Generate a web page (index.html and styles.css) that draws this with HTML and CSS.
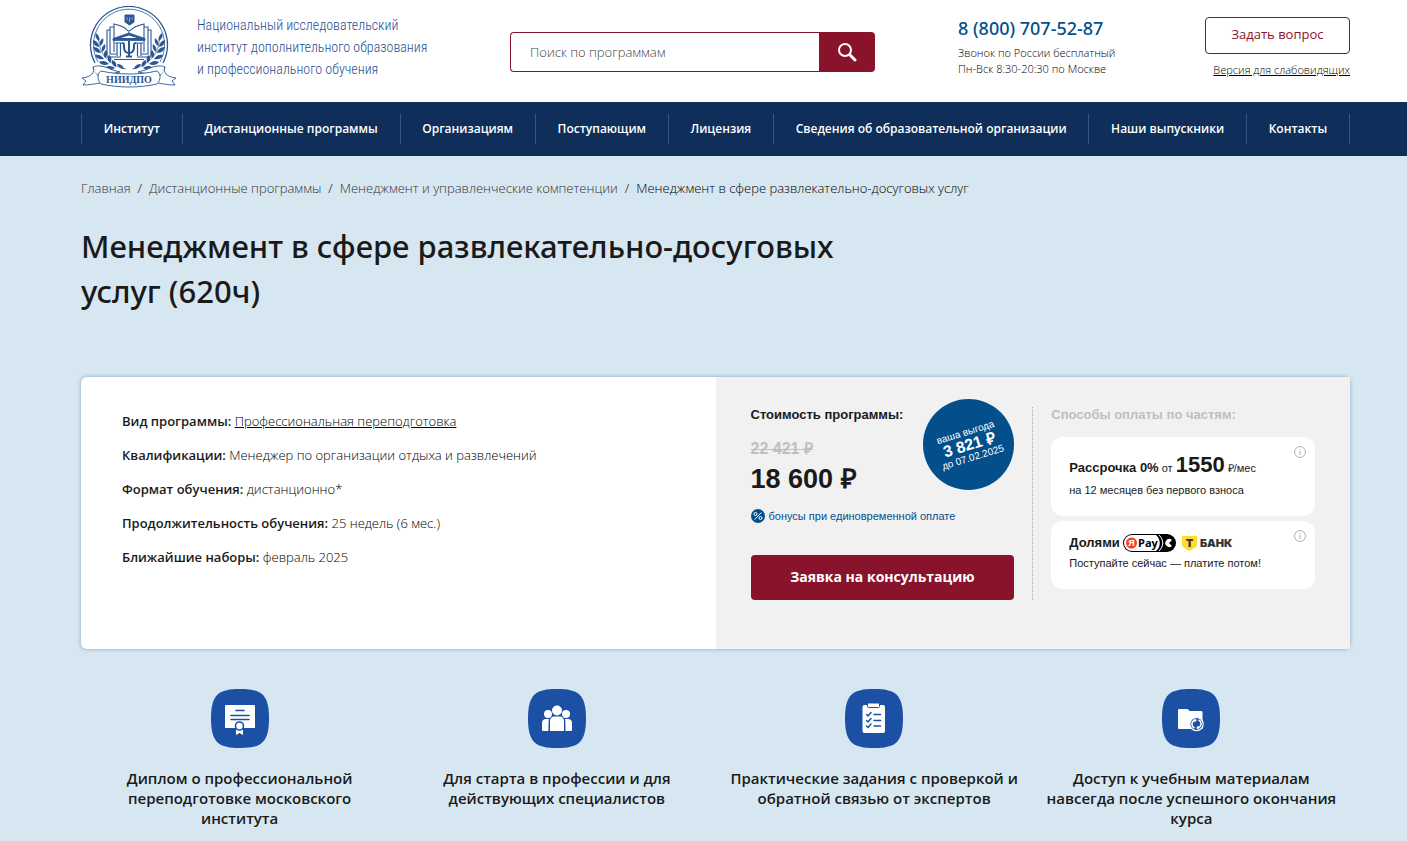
FILE: index.html
```html
<!DOCTYPE html>
<html lang="ru">
<head>
    <meta charset="UTF-8">
    <meta name="viewport" content="width=device-width, initial-scale=1.0">
    <title>Менеджмент в сфере развлекательно-досуговых услуг (620ч)</title>
    <link rel="stylesheet" href="styles.css">
</head>
<body>
    <header class="header wrap">
        <a class="logo" href="#">
            <svg class="logo-emblem" width="96" height="82" viewBox="0 0 96 82" fill="none" stroke="#2a5795">
                <path d="M14 57A38.500 38.500 0 1 1 82 57" stroke-width="1.3"/>
                <path d="M17 56A35.500 35.500 0 1 1 79 56" stroke-width=".8"/>
                <path d="M44 9h9v7l-4.500 3-4.500-3z" fill="#2a5795"/>
                <path d="M46 11v3m5-3v3m-2.500-3v5" stroke="#b9cbe3" stroke-width=".7"/>
                <!-- book -->
                <path d="M47 25c-3-4-9-6-14-7v28M49 25c3-4 9-6 14-7v28M33 21h-4v27h6M63 21h4v27h-6M29 24h-3v27h9M67 24h3v27h-9M48 24v5" stroke-width="1.1"/>
                <!-- temple -->
                <path d="M48 27L32 32.500v2h32v-2z" fill="#2a5795" stroke-width=".8"/>
                <path d="M40 32l8-2.500 8 2.500z" fill="#fff" stroke="none"/>
                <path d="M34 37h7M55 37h7M36 37v13M39.500 37v13M56.500 37v13M60 37v13M35 51h5M56 51h5M33 53.500h30" stroke-width="1.2"/>
                <path d="M48 35v16M45 50.500h6" stroke-width="2"/>
                <path d="M41 37c2.500 0 2 2 2 4 0 4 2 6 5 6s5-2 5-6c0-2-.5-4 2-4" stroke-width="2"/>
                <!-- laurel -->
                <path d="M18 32c-1 14 9 27 27 31M78 32c1 14-9 27-27 31" stroke-width=".7"/>
                <g fill="#2a5795" stroke="none" transform="translate(0 -2)">
                    <path d="M18 37c-4-3-4-6-3-8 3 2 4 5 3 8zM18 43c-5-1-6-4-6-7 4 1 6 4 6 7zM20 49c-5 0-7-3-8-6 4 0 7 2 8 6zM23 55c-5 1-8-1-9-4 4-1 7 1 9 4zM28 60c-4 2-8 1-10-2 4-2 7-1 10 2zM34 64c-4 3-8 2-10 0 3-3 7-2 10 0zM19 42c3-2 4-5 3-8-3 2-4 5-3 8zM21 48c3-2 4-5 3-8-3 2-4 5-3 8zM24 54c3-3 3-6 1-8-2 2-3 5-1 8zM29 59c2-3 2-6-1-8-2 3-1 6 1 8zM35 63c1-4-1-6-4-7-1 3 1 6 4 7zM43 65c-1-4-4-5-7-5 1 3 4 5 7 5z"/>
                    <path d="M78 37c4-3 4-6 3-8-3 2-4 5-3 8zM78 43c5-1 6-4 6-7-4 1-6 4-6 7zM76 49c5 0 7-3 8-6-4 0-7 2-8 6zM73 55c5 1 8-1 9-4-4-1-7 1-9 4zM68 60c4 2 8 1 10-2-4-2-7-1-10 2zM62 64c4 3 8 2 10 0-3-3-7-2-10 0zM77 42c-3-2-4-5-3-8 3 2 4 5 3 8zM75 48c-3-2-4-5-3-8 3 2 4 5 3 8zM72 54c-3-3-3-6-1-8 2 2 3 5 1 8zM67 59c-2-3-2-6 1-8 2 3 1 6-1 8zM61 63c-1-4 1-6 4-7 1 3-1 6-4 7zM53 65c1-4 4-5 7-5-1 3-4 5-7 5z"/>
                </g>
                <!-- ribbon -->
                <g stroke-width=".9">
                    <path d="M12 61c4-2 10-1 15 1 4 2 8 3 12 4l-20 4c-5-1-6-6-7-9zM84 61c-4-2-10-1-15 1-4 2-8 3-12 4l20 4c5-1 6-6 7-9z" fill="#fff"/>
                    <path d="M12 61c2 5-1 10-11 11l4 3-3 4c6 0 11-1 17-2M84 61c-2 5 1 10 11 11l-4 3 3 4c-6 0-11-1-17-2" fill="#fff"/>
                    <path d="M20 78c-4-4-4-11 0-13 18 4 38 4 56 0 4 2 4 9 0 13-18 4-38 4-56 0z" fill="#fff"/>
                </g>
                <text x="48" y="77" text-anchor="middle" class="emblem-text">НИИДПО</text>
            </svg>
            <span class="logo-text">Национальный исследовательский<br>институт дополнительного образования<br>и профессионального обучения</span>
        </a>
        <form class="search">
            <input class="search-input" type="text" placeholder="Поиск по программам" aria-label="Поиск по программам">
            <button class="search-button" type="submit" aria-label="Найти">
                <svg width="20" height="20" viewBox="0 0 20 20" fill="none" stroke="#fff">
                    <circle cx="8" cy="8" r="6" stroke-width="2"/>
                    <path d="M13 13l5 5" stroke-width="3" stroke-linecap="round"/>
                </svg>
            </button>
        </form>
        <div class="contacts">
            <a class="phone" href="tel:88007075287">8 (800) 707-52-87</a>
            <p class="contacts-note">Звонок по России бесплатный<br>Пн-Вск 8:30-20:30 по Москве</p>
        </div>
        <div class="actions">
            <button class="ask-button" type="button">Задать вопрос</button>
            <a class="vision-link" href="#">Версия для слабовидящих</a>
        </div>
    </header>

    <nav class="nav">
        <ul class="nav-list wrap">
            <li><a href="#">Институт</a></li>
            <li><a href="#">Дистанционные программы</a></li>
            <li><a href="#">Организациям</a></li>
            <li><a href="#">Поступающим</a></li>
            <li><a href="#">Лицензия</a></li>
            <li><a href="#">Сведения об образовательной организации</a></li>
            <li><a href="#">Наши выпускники</a></li>
            <li><a href="#">Контакты</a></li>
        </ul>
    </nav>

    <main class="wrap">
        <div class="breadcrumbs">
            <a href="#">Главная</a><span>/</span><a href="#">Дистанционные программы</a><span>/</span><a href="#">Менеджмент и управленческие компетенции</a><span>/</span>Менеджмент в сфере развлекательно-досуговых услуг
        </div>
        <h1>Менеджмент в сфере развлекательно-досуговых услуг (620ч)</h1>

        <section class="program">
            <div class="program-info">
                <p><b>Вид программы:</b> <a href="#">Профессиональная переподготовка</a></p>
                <p><b>Квалификации:</b> Менеджер по организации отдыха и развлечений</p>
                <p><b>Формат обучения:</b> дистанционно*</p>
                <p><b>Продолжительность обучения:</b> 25 недель (6 мес.)</p>
                <p><b>Ближайшие наборы:</b> февраль 2025</p>
            </div>
            <div class="program-price">
                <div class="price">
                    <p class="price-title">Стоимость программы:</p>
                    <p class="price-old">22 421 ₽</p>
                    <p class="price-new">18 600 ₽</p>
                    <p class="price-bonus">
                        <svg width="14" height="14" viewBox="0 0 14 14" fill="none" stroke="#fff">
                            <circle cx="7" cy="7" r="7" fill="#034f8b" stroke="none"/>
                            <path d="M10.500 3.500l-7 7"/>
                            <circle cx="4.500" cy="5" r="1.500"/>
                            <circle cx="9.500" cy="9" r="1.500"/>
                        </svg>
                        бонусы при единовременной оплате
                    </p>
                    <button class="apply-button" type="button">Заявка на консультацию</button>
                    <div class="profit">
                        <div class="profit-text">ваша выгода<strong>3 821 ₽</strong>до 07.02.2025</div>
                    </div>
                </div>
                <div class="parts">
                    <p class="parts-title">Способы оплаты по частям:</p>
                    <div class="part part-installment">
                        <p><span class="part-name">Рассрочка 0%</span> от <strong>1550</strong> ₽/мес</p>
                        <p>на 12 месяцев без первого взноса</p>
                        <svg class="info" width="12" height="12" viewBox="0 0 12 12" fill="none" stroke="#b0b0b0">
                            <circle cx="6" cy="6" r="5.500"/>
                            <path d="M6 3v1M6 5v4"/>
                        </svg>
                    </div>
                    <div class="part part-split">
                        <p class="part-row">
                            <span class="part-name">Долями</span>
                            <svg width="53" height="18" viewBox="0 0 53 18">
                                <rect width="53" height="18" rx="9" fill="#000"/>
                                <path d="M9 1h24c5 4 5 12 0 16H9A8 8 0 0 1 9 1z" fill="#fff"/>
                                <path d="M36 1c5 5 5 11 0 16" stroke="#fff" stroke-width="1" fill="none"/>
                                <circle cx="8.500" cy="9" r="5.500" fill="#fc3f1d"/>
                                <text x="8.500" y="12" text-anchor="middle" class="pay-ya">Я</text>
                                <text x="15" y="13" class="pay-text">Pay</text>
                                <path d="M49 6a4 4 0 1 0 0 6l-3-3z" fill="#fff"/>
                            </svg>
                            <svg class="bank" width="54" height="18" viewBox="0 0 54 18">
                                <path d="M0 2h15v9c0 2-3 3.500-7.500 6C3 14.500 0 13 0 11z" fill="#ffdd2d"/>
                                <text x="7.500" y="13" text-anchor="middle" class="bank-t">Т</text>
                                <text x="18" y="13" class="bank-text">БАНК</text>
                            </svg>
                        </p>
                        <p>Поступайте сейчас — платите потом!</p>
                        <svg class="info" width="12" height="12" viewBox="0 0 12 12" fill="none" stroke="#b0b0b0">
                            <circle cx="6" cy="6" r="5.500"/>
                            <path d="M6 3v1M6 5v4"/>
                        </svg>
                    </div>
                </div>
            </div>
        </section>

        <section class="benefits">
            <div class="benefit">
                <svg width="58" height="59" viewBox="0 0 58 59">
                    <path class="tile" d="M29 0C50 0 58 5 58 29.500S50 59 29 59 0 54 0 29.500 8 0 29 0z"/>
                    <path d="M15 16h28a1 1 0 0 1 1 1v22H14V17a1 1 0 0 1 1-1z" fill="#fff"/>
                    <path d="M25 21.500h8M20 26.500h18M20 30.500h18" stroke="#1b50a5" stroke-width="1.600" stroke-linecap="round"/>
                    <path d="M25 39h7v7l-3.500-2-3.500 2z" fill="#fff"/>
                    <circle cx="28.500" cy="37" r="4" fill="#fff" stroke="#1b50a5" stroke-width="1.600"/>
                </svg>
                <p>Диплом о профессиональной переподготовке московского института</p>
            </div>
            <div class="benefit">
                <svg width="58" height="59" viewBox="0 0 58 59">
                    <path class="tile" d="M29 0C50 0 58 5 58 29.500S50 59 29 59 0 54 0 29.500 8 0 29 0z"/>
                    <g fill="#fff">
                        <circle cx="29" cy="21.500" r="5"/>
                        <circle cx="20" cy="25" r="4"/>
                        <circle cx="38" cy="25" r="4"/>
                        <path d="M22 42V32c0-3 2-4.500 4-4.500h6c2 0 4 1.500 4 4.500v10zM20.500 42h-5c-1 0-1.500-.5-1.500-1.500V34c0-3 2-4 3.500-4H21c-.5 1-.5 8-.5 12zM37.500 42h5c1 0 1.500-.5 1.500-1.500V34c0-3-2-4-3.500-4H37c.5 1 .5 8 .5 12z"/>
                    </g>
                </svg>
                <p>Для старта в профессии и для действующих специалистов</p>
            </div>
            <div class="benefit">
                <svg width="58" height="59" viewBox="0 0 58 59">
                    <path class="tile" d="M29 0C50 0 58 5 58 29.500S50 59 29 59 0 54 0 29.500 8 0 29 0z"/>
                    <rect x="17.500" y="16" width="22.500" height="28" rx="2" fill="#fff"/>
                    <rect x="22.500" y="14" width="12" height="4.500" rx="1" fill="#fff" stroke="#1b50a5" stroke-width="1"/>
                    <path d="M21.500 25.500l1.500 1.500 3-3.500M21.500 31.500l1.500 1.500 3-3.500M21.500 37l1.500 1.500 3-3.500M29 25.500h6.500M29 31.500h6.500M29 37h6.500" fill="none" stroke="#1b50a5" stroke-width="1.500" stroke-linecap="round"/>
                </svg>
                <p>Практические задания с проверкой и обратной связью от экспертов</p>
            </div>
            <div class="benefit">
                <svg width="58" height="59" viewBox="0 0 58 59">
                    <path class="tile" d="M29 0C50 0 58 5 58 29.500S50 59 29 59 0 54 0 29.500 8 0 29 0z"/>
                    <path d="M17.500 20H25c1.500 0 2 2 3 2h11c1 0 1.500.5 1.500 1.500V40h-23c-1 0-1.500-.5-1.500-1.500v-17c0-1 .5-1.500 1.500-1.500z" fill="#fff"/>
                    <circle cx="34.500" cy="35" r="6.700" fill="#1b50a5" stroke="#fff" stroke-width="1.200"/>
                    <path d="M33 31c-4 1.500-4 6.500-.5 8M36 39c4-1.500 4-6.500.5-8" fill="none" stroke="#fff" stroke-width="1.400"/>
                    <path d="M32 29.500l3 1.500-2.500 2.500zM37 40.500L34 39l2.500-2.500z" fill="#fff"/>
                </svg>
                <p>Доступ к учебным материалам навсегда после успешного окончания курса</p>
            </div>
        </section>
    </main>
</body>
</html>
```

FILE: styles.css
```css
* {
    box-sizing: border-box;
}
body {
    margin: 0;
    background-color: #d7e7f1;
    color: #000;
    font-family: "Open Sans", sans-serif;
    font-size: 13px;
    font-weight: 300;
}
p, h1, ul {
    margin: 0;
    padding: 0;
}
a {
    color: inherit;
}
strong {
    font-weight: 700;
}
button {
    font-family: inherit;
    cursor: pointer;
}
.wrap {
    padding-left: 81px;
    padding-right: 57px;
}
.header {
    display: flex;
    align-items: flex-start;
    height: 102px;
    background-color: #fff;
}
.logo {
    display: flex;
    flex: 0 0 429px;
    gap: 20px;
    padding-top: 6px;
    color: #1f4f92;
    text-decoration: none;
}
.emblem-text {
    font: bold 10px "Liberation Serif", serif;
    fill: #2a5795;
    stroke: none;
}
.logo-text {
    padding-top: 8px;
    font-family: "Roboto Condensed", Roboto, sans-serif;
    font-size: 14px;
    line-height: 22px;
    white-space: nowrap;
}
.search {
    display: flex;
    flex: 0 0 365px;
    height: 40px;
    margin-top: 32px;
}
.search-input {
    flex: 1;
    min-width: 0;
    padding: 0 19px;
    border: 1px solid #8a132c;
    border-right: none;
    border-radius: 4px 0 0 4px;
    font-family: inherit;
    font-size: 13px;
    font-weight: 300;
}
.search-input::placeholder {
    color: #444;
}
.search-button {
    display: flex;
    align-items: center;
    justify-content: center;
    width: 56px;
    padding: 0;
    border: none;
    border-radius: 0 4px 4px 0;
    background-color: #8a132c;
}
.contacts {
    padding: 16px 0 0 83px;
}
.phone {
    color: #034f8b;
    font-family: "Noto Sans", sans-serif;
    font-size: 18px;
    font-weight: 500;
    line-height: 25px;
    text-decoration: none;
}
.contacts-note {
    padding-top: 4px;
    font-size: 11px;
    line-height: 16px;
}
.actions {
    display: flex;
    flex-direction: column;
    align-items: flex-end;
    gap: 8px;
    margin-left: auto;
    padding-top: 17px;
}
.ask-button {
    width: 145px;
    height: 37px;
    padding-bottom: 4px;
    border: 1px solid #8a132c;
    border-radius: 4px;
    background-color: #fff;
    color: #8a132c;
    font-size: 13px;
    font-weight: 500;
}
.vision-link {
    font-size: 11px;
    line-height: 16px;
}
.nav {
    background-color: #0f2e5a;
}
.nav-list {
    display: flex;
    padding-top: 12px;
    padding-bottom: 12px;
    list-style: none;
}
.nav-list li {
    flex: 1 1 auto;
    border-left: 1px solid #3a547b;
    text-align: center;
}
.nav-list li:last-child {
    border-right: 1px solid #3a547b;
}
.nav-list a {
    color: #fff;
    font-size: 12px;
    font-weight: 600;
    line-height: 30px;
    text-decoration: none;
    white-space: nowrap;
}
.breadcrumbs {
    padding-top: 22px;
    line-height: 20px;
}
.breadcrumbs a {
    color: #333;
    text-decoration: none;
}
.breadcrumbs span {
    padding: 0 7px;
}
h1 {
    max-width: 820px;
    padding-top: 26px;
    color: #1a1a1a;
    font-family: "Noto Sans", sans-serif;
    font-size: 31px;
    font-weight: 500;
    line-height: 45px;
}
.program {
    display: grid;
    grid-template-columns: 1fr 1fr;
    min-height: 272px;
    margin-top: 63px;
    border-radius: 6px;
    background-color: #fff;
    box-shadow: 0 0 4px rgba(0, 40, 80, 0.35);
}
.program-info {
    display: flex;
    flex-direction: column;
    gap: 14px;
    padding: 34px 41px;
    line-height: 20px;
}
.program-info b {
    color: #1a1a1a;
    font-weight: 600;
}
.program-price {
    display: flex;
    padding: 30px 35px 49px;
    background-color: #f1f1f1;
    color: #1a1a1a;
    font-family: "Liberation Sans", sans-serif;
}
.price {
    position: relative;
    flex: 1;
    margin-right: 18px;
}
.price-title, .parts-title {
    font-size: 13px;
    font-weight: bold;
    line-height: 16px;
}
.price-old {
    padding-top: 16px;
    color: #bfbfbf;
    font-size: 16px;
    font-weight: bold;
    line-height: 20px;
    text-decoration: line-through;
}
.price-new {
    padding-top: 3px;
    font-size: 27px;
    font-weight: bold;
    line-height: 34px;
}
.price-bonus {
    display: flex;
    align-items: center;
    gap: 4px;
    padding-top: 12px;
    color: #034f8b;
    font-size: 11px;
    line-height: 16px;
    white-space: nowrap;
}
.apply-button {
    display: block;
    width: 100%;
    height: 45px;
    margin-top: 31px;
    padding-bottom: 3px;
    border: none;
    border-radius: 4px;
    background-color: #8a132c;
    color: #fff;
    font-family: "Open Sans", sans-serif;
    font-size: 14px;
    font-weight: 700;
}
.profit {
    position: absolute;
    top: -8px;
    right: 0;
    display: flex;
    align-items: center;
    justify-content: center;
    width: 91px;
    height: 91px;
    border-radius: 50%;
    background-color: #034f8b;
}
.profit-text {
    color: #fff;
    font-size: 10px;
    line-height: 13px;
    text-align: center;
    transform: rotate(-17deg);
}
.profit-text strong {
    display: block;
    font-size: 16px;
}
.parts {
    flex: 1;
    padding-left: 18px;
    border-left: 1px dotted #aaa;
}
.parts-title {
    padding-bottom: 14px;
    color: #bfbfbf;
    white-space: nowrap;
}
.part {
    position: relative;
    padding: 12px 18px;
    border-radius: 12px;
    background-color: #fff;
    font-size: 11px;
    line-height: 18px;
    white-space: nowrap;
}
.part-installment {
    height: 79px;
}
.part-installment strong {
    font-size: 22px;
    line-height: 32px;
}
.part-split {
    height: 68px;
    margin-top: 5px;
    line-height: 20px;
}
.part-name {
    font-size: 13px;
    font-weight: bold;
}
.part-row {
    display: flex;
    align-items: center;
    gap: 3px;
}
.pay-ya {
    font: bold 9px "Liberation Sans", sans-serif;
    fill: #fff;
}
.pay-text {
    font: bold 11px "Open Sans", sans-serif;
}
.bank {
    margin-left: 3px;
}
.bank-t {
    font: 900 11px Inter, sans-serif;
    fill: #333;
}
.bank-text {
    font: 900 11px Inter, sans-serif;
    fill: #333;
}
.info {
    position: absolute;
    top: 9px;
    right: 9px;
}
.benefits {
    display: grid;
    grid-template-columns: repeat(4, 1fr);
    padding-top: 40px;
}
.benefit {
    display: flex;
    flex-direction: column;
    align-items: center;
    gap: 20px;
    padding: 0 12px;
    color: #1a1a1a;
    font-size: 15px;
    font-weight: 600;
    line-height: 20px;
    text-align: center;
}
.tile {
    fill: #1b50a5;
}
```
